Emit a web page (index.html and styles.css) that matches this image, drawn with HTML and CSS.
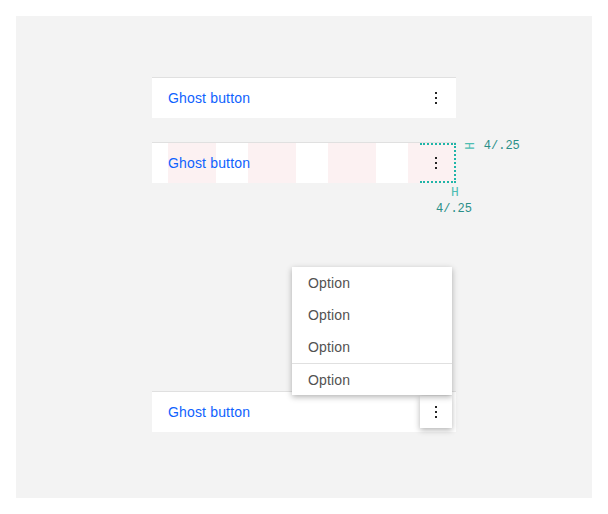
FILE: index.html
```html
<!DOCTYPE html>
<html lang="en">
<head>
<meta charset="utf-8">
<title>Overflow menu</title>
<link rel="stylesheet" href="styles.css">
</head>
<body>
<div class="panel">
  <div class="row">
    <span class="ghost">Ghost button</span>
    <span class="trigger">
      <svg class="dots" width="16" height="16" viewBox="0 0 16 16"><rect x="7" y="2" width="2" height="2"/><rect x="7" y="7" width="2" height="2"/><rect x="7" y="12" width="2" height="2"/></svg>
    </span>
  </div>

  <div class="row row-grid">
    <span class="ghost">Ghost button</span>
    <span class="trigger">
      <svg class="dots" width="16" height="16" viewBox="0 0 16 16"><rect x="7" y="2" width="2" height="2"/><rect x="7" y="7" width="2" height="2"/><rect x="7" y="12" width="2" height="2"/></svg>
    </span>
    <div class="spec-box"></div>
    <div class="spec-v"><span class="rot">H</span><span class="spec-text">4/.25</span></div>
    <div class="spec-h"><span class="spec-h-glyph">H</span><span class="spec-text">4/.25</span></div>
  </div>

  <div class="row row-open">
    <span class="ghost">Ghost button</span>
    <span class="trigger trigger-open">
      <svg class="dots" width="16" height="16" viewBox="0 0 16 16"><rect x="7" y="2" width="2" height="2"/><rect x="7" y="7" width="2" height="2"/><rect x="7" y="12" width="2" height="2"/></svg>
    </span>
    <ul class="menu">
      <li class="opt">Option</li>
      <li class="opt">Option</li>
      <li class="opt">Option</li>
      <li class="opt opt-divider">Option</li>
    </ul>
  </div>
</div>
</body>
</html>
```

FILE: styles.css
```css
* { box-sizing: border-box; }
html, body { margin: 0; padding: 0; background: #ffffff; }
body { font-family: "Liberation Sans", Arial, sans-serif; }

.panel {
  margin: 16px;
  height: 482px;
  background: #f3f3f3;
  padding: 61px 0 0 136px;
}

.row {
  position: relative;
  width: 304px;
  height: 41px;
  border-top: 1px solid #e0e0e0;
  background: #ffffff;
  display: flex;
  align-items: center;
  justify-content: space-between;
  padding: 0 4px 0 16px;
}
.row + .row { margin-top: 24px; }
.row-open { margin-top: 208px !important; }

.row-grid {
  background-color: #ffffff;
  background-image: linear-gradient(to right, #fcf1f2 48px, transparent 48px);
  background-size: 80px 100%;
  background-position: 16px 0;
  background-repeat: repeat-x;
}

.ghost {
  color: #0f62fe;
  font-size: 14px;
  letter-spacing: 0.16px;
  line-height: 18px;
}

.trigger {
  width: 32px;
  height: 32px;
  display: flex;
  align-items: center;
  justify-content: center;
}
.trigger-open {
  background: #ffffff;
  box-shadow: 0 2px 6px rgba(0, 0, 0, 0.3);
}
.dots { fill: #262626; display: block; }

.spec-box {
  position: absolute;
  left: 268px;
  top: 0;
  width: 36px;
  height: 40px;
  border-top: 2px dotted #1fb5a8;
  border-right: 2px dotted #1fb5a8;
  border-bottom: 2px dotted #1fb5a8;
}
.spec-v {
  position: absolute;
  left: 312px;
  top: -5px;
  display: flex;
  align-items: center;
  gap: 12px;
  font-family: "Liberation Mono", "DejaVu Sans Mono", monospace;
  font-size: 12px;
  line-height: 16px;
  color: #2a8f88;
}
.rot {
  display: inline-block;
  transform: rotate(90deg);
  color: #4dbdb2;
  font-size: 13px;
}
.spec-h {
  position: absolute;
  left: 284px;
  top: 42px;
  width: 36px;
  display: flex;
  flex-direction: column;
  align-items: center;
  font-family: "Liberation Mono", "DejaVu Sans Mono", monospace;
  font-size: 12px;
  line-height: 16px;
  color: #2a8f88;
}
.spec-h-glyph { color: #4dbdb2; margin-left: 2px; font-size: 13px; }

.menu {
  position: absolute;
  left: 140px;
  top: -125px;
  width: 160px;
  margin: 0;
  padding: 0;
  list-style: none;
  background: #ffffff;
  box-shadow: 0 2px 6px rgba(0, 0, 0, 0.3);
  z-index: 2;
}
.opt {
  height: 32px;
  padding-left: 16px;
  display: flex;
  align-items: center;
  font-size: 14px;
  letter-spacing: 0.16px;
  color: #525252;
}
.opt-divider { border-top: 1px solid #e0e0e0; }
```
